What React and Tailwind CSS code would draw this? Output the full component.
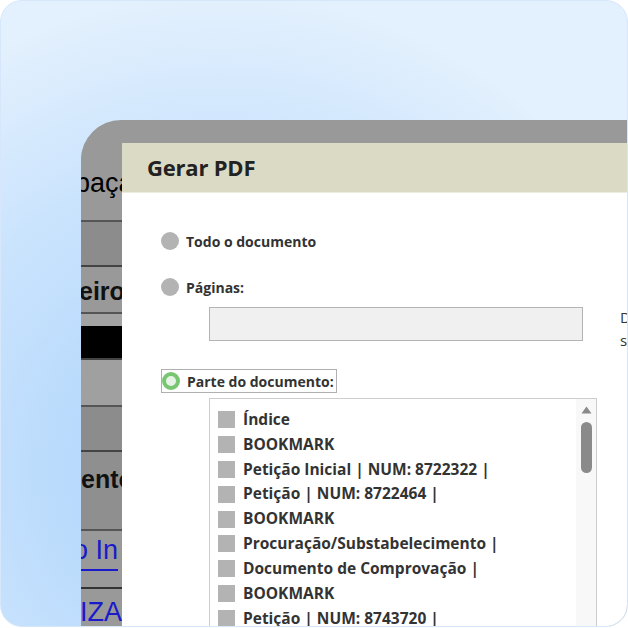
export default function App() {
  const items = [
    "Índice",
    "BOOKMARK",
    "Petição Inicial | NUM: 8722322 |",
    "Petição | NUM: 8722464 |",
    "BOOKMARK",
    "Procuração/Substabelecimento |",
    "Documento de Comprovação |",
    "BOOKMARK",
    "Petição | NUM: 8743720 |",
    "Petição | NUM: 8743721 |",
  ];
  const ui = { fontFamily: '"Open Sans", "Noto Sans", sans-serif' };
  const arial = { fontFamily: '"Liberation Sans", Arial, sans-serif' };
  return (
    <div className="w-[628px] h-[628px] overflow-hidden bg-white">
      <div className="relative w-[628px] h-[627px] rounded-[22px] overflow-hidden border border-[#d6e7fb] bg-[radial-gradient(ellipse_80%_80%_at_35%_75%,#a8d0fb_0%,#b9dafc_30%,#cbe4fd_62%,#e3f0fd_95%)]">
        <div className="absolute left-[80px] top-[119px] w-[546px] h-[520px] rounded-tl-[40px] overflow-hidden bg-[#999999] flex">
          {/* left strip of underlying page */}
          <div className="w-[41px] shrink-0 pt-[22px] flex flex-col overflow-hidden" style={arial}>
            <div className="h-[80px] relative bg-[#999999] border-b-2 border-[#555] shrink-0">
              <span className="absolute left-[-6px] top-[28px] text-[27px] leading-none text-black whitespace-nowrap">paça</span>
            </div>
            <div className="h-[45px] bg-[#8c8c8c] border-b-2 border-[#444] shrink-0" />
            <div className="h-[47px] relative bg-[#999999] border-b-2 border-[#555] shrink-0">
              <span className="absolute left-[-2px] top-[12px] text-[25px] font-bold leading-none text-[#111] whitespace-nowrap">eiro</span>
            </div>
            <div className="h-[12px] bg-[#a3a3a3] shrink-0" />
            <div className="h-[34px] bg-black border-b-2 border-[#444] shrink-0" />
            <div className="h-[47px] bg-[#a0a0a0] border-b-2 border-[#555] shrink-0" />
            <div className="h-[45px] bg-[#8c8c8c] border-b-2 border-[#444] shrink-0" />
            <div className="h-[79px] relative bg-[#8f8f8f] border-b-2 border-[#555] shrink-0">
              <span className="absolute left-[0px] top-[15px] text-[25px] font-bold leading-none text-[#111] whitespace-nowrap">ento</span>
            </div>
            <div className="h-[58px] relative bg-[#999999] border-b-2 border-[#333] shrink-0">
              <span className="absolute left-[-8px] top-[6px] text-[27px] leading-none text-[#1a1acc] whitespace-nowrap border-b-2 border-[#1a1acc] pb-[5px]">o In</span>
            </div>
            <div className="h-[40px] relative bg-[#999999] shrink-0">
              <span className="absolute left-[-1px] top-[10px] text-[27px] leading-none text-[#1a1acc] whitespace-nowrap">IZA</span>
            </div>
          </div>
          {/* dialog */}
          <div className="flex-1 mt-[23px] bg-white flex flex-col" style={ui}>
            <div className="h-[50px] shrink-0 bg-[#dadac5] border-b border-[#ecece0] flex items-center pl-[25px]">
              <span className="text-[22px] font-bold text-[#222] tracking-[-0.2px]">Gerar PDF</span>
            </div>
            <div className="relative flex flex-col pl-[39px] pt-[37px]">
              <div className="flex items-center gap-[7px] h-[22px]">
                <span className="w-[18px] h-[18px] rounded-full bg-[#b3b3b3]" />
                <span className="text-[14px] font-bold text-[#333]">Todo o documento</span>
              </div>
              <div className="flex items-center gap-[7px] h-[22px] mt-[24px]">
                <span className="w-[18px] h-[18px] rounded-full bg-[#b3b3b3]" />
                <span className="text-[14px] font-bold text-[#333]">Páginas:</span>
              </div>
              <div className="ml-[48px] mt-[9px] w-[374px] h-[34px] bg-[#f0f0f0] border border-[#b4b4b4]" />
              <div className="absolute left-[498px] top-[113px] text-[15px] leading-[23px] text-[#333]">
                <div>De</div>
                <div>se</div>
              </div>
              <div className="mt-[28px] self-start flex items-center gap-[7px] h-[24px] border border-[#b0b0b0] pr-[2px]">
                <span className="w-[18px] h-[18px] rounded-full border-[4px] border-[#79c672] bg-[#e6f3e6]" />
                <span className="text-[14px] font-bold text-[#333]">Parte do documento:</span>
              </div>
              <div className="ml-[48px] mt-[5px] w-[388px] h-[300px] border border-[#cccccc] flex">
                <div className="flex-1 pl-[8px] pt-[8px] flex flex-col">
                  {items.map((t, i) => (
                    <div key={i} className="flex items-center gap-[8px] h-[24.9px] shrink-0">
                      <span className="w-[17px] h-[17px] bg-[#b3b3b3] shrink-0" />
                      <span className="text-[15.5px] font-bold text-[#333] whitespace-nowrap">{t}</span>
                    </div>
                  ))}
                </div>
                <div className="w-[20px] bg-[#f8f8f8] flex flex-col items-center pt-[7px]">
                  <svg width="11" height="8" viewBox="0 0 11 8">
                    <path d="M5.5 0.5 L10.5 7.5 L0.5 7.5 Z" fill="#8a8a8a" />
                  </svg>
                  <div className="mt-[8px] w-[11px] h-[51px] rounded-full bg-[#8a8a8a]" />
                </div>
              </div>
            </div>
          </div>
        </div>
      </div>
    </div>
  );
}
